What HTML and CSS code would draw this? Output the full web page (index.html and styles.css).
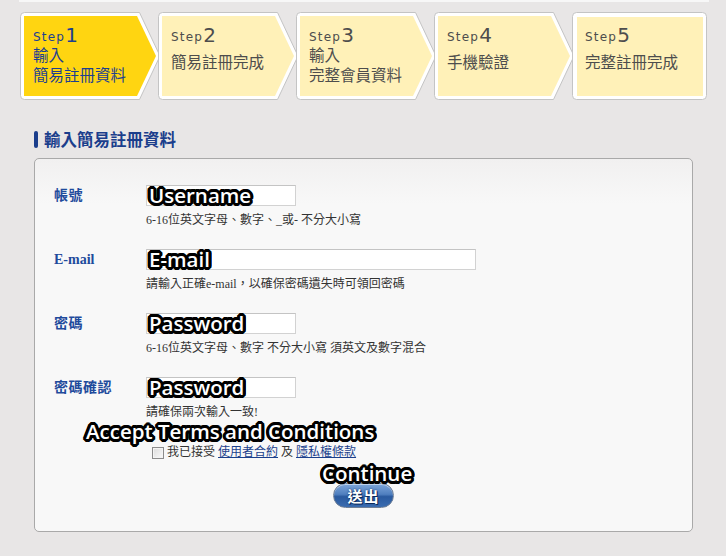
FILE: index.html
```html
<!DOCTYPE html>
<html lang="zh-Hant">
<head>
<meta charset="utf-8">
<title>輸入簡易註冊資料</title>
<link rel="stylesheet" href="styles.css">
</head>
<body>
<div class="page">
  <div class="topstrip"></div>

  <ol class="steps">
    <li class="step step-active">
      <svg class="step-bg" width="141" height="88" viewBox="0 0 141 88">
        <path class="outer" d="M4.5 0.5 H119.5 L140 44 L119.5 87.5 H4.5 A4 4 0 0 1 0.5 83.5 V4.5 A4 4 0 0 1 4.5 0.5 Z"/>
        <path class="inner" d="M4 4 H117 L136 44 L117 84 H4 Z"/>
      </svg>
      <div class="step-content">
        <div class="step-head"><span class="step-word">Step</span><span class="step-num">1</span></div>
        <div class="step-text">輸入<br>簡易註冊資料</div>
      </div>
    </li>
    <li class="step">
      <svg class="step-bg" width="141" height="88" viewBox="0 0 141 88">
        <path class="outer" d="M4.5 0.5 H119.5 L140 44 L119.5 87.5 H4.5 A4 4 0 0 1 0.5 83.5 V4.5 A4 4 0 0 1 4.5 0.5 Z"/>
        <path class="inner" d="M4 4 H117 L136 44 L117 84 H4 Z"/>
      </svg>
      <div class="step-content">
        <div class="step-head"><span class="step-word">Step</span><span class="step-num">2</span></div>
        <div class="step-text step-text-single">簡易註冊完成</div>
      </div>
    </li>
    <li class="step">
      <svg class="step-bg" width="141" height="88" viewBox="0 0 141 88">
        <path class="outer" d="M4.5 0.5 H119.5 L140 44 L119.5 87.5 H4.5 A4 4 0 0 1 0.5 83.5 V4.5 A4 4 0 0 1 4.5 0.5 Z"/>
        <path class="inner" d="M4 4 H117 L136 44 L117 84 H4 Z"/>
      </svg>
      <div class="step-content">
        <div class="step-head"><span class="step-word">Step</span><span class="step-num">3</span></div>
        <div class="step-text">輸入<br>完整會員資料</div>
      </div>
    </li>
    <li class="step">
      <svg class="step-bg" width="141" height="88" viewBox="0 0 141 88">
        <path class="outer" d="M4.5 0.5 H119.5 L140 44 L119.5 87.5 H4.5 A4 4 0 0 1 0.5 83.5 V4.5 A4 4 0 0 1 4.5 0.5 Z"/>
        <path class="inner" d="M4 4 H117 L136 44 L117 84 H4 Z"/>
      </svg>
      <div class="step-content">
        <div class="step-head"><span class="step-word">Step</span><span class="step-num">4</span></div>
        <div class="step-text step-text-single">手機驗證</div>
      </div>
    </li>
    <li class="step step-last">
      <svg class="step-bg" width="135" height="88" viewBox="0 0 135 88">
        <rect class="outer" x="0.5" y="0.5" width="134" height="87" rx="4" ry="4"/>
        <rect class="inner" x="5" y="5" width="126" height="79"/>
      </svg>
      <div class="step-content">
        <div class="step-head"><span class="step-word">Step</span><span class="step-num">5</span></div>
        <div class="step-text step-text-single">完整註冊完成</div>
      </div>
    </li>
  </ol>

  <h2 class="section-title">輸入簡易註冊資料</h2>

  <form class="panel">
    <div class="row">
      <label class="row-label" for="f-user">帳號</label>
      <div class="row-field">
        <div class="input-wrap">
          <input id="f-user" class="text-input input-short" type="text">
          <span class="annot annot-input">Username</span>
        </div>
        <div class="hint">6-16位英文字母、數字、_或- 不分大小寫</div>
      </div>
    </div>

    <div class="row">
      <label class="row-label label-latin" for="f-mail">E-mail</label>
      <div class="row-field">
        <div class="input-wrap">
          <input id="f-mail" class="text-input input-long" type="text">
          <span class="annot annot-input">E-mail</span>
        </div>
        <div class="hint">請輸入正確e-mail，以確保密碼遺失時可領回密碼</div>
      </div>
    </div>

    <div class="row">
      <label class="row-label" for="f-pw">密碼</label>
      <div class="row-field">
        <div class="input-wrap">
          <input id="f-pw" class="text-input input-short" type="password">
          <span class="annot annot-input">Password</span>
        </div>
        <div class="hint">6-16位英文字母、數字 不分大小寫 須英文及數字混合</div>
      </div>
    </div>

    <div class="row">
      <label class="row-label" for="f-pw2">密碼確認</label>
      <div class="row-field">
        <div class="input-wrap">
          <input id="f-pw2" class="text-input input-short" type="password">
          <span class="annot annot-input">Password</span>
        </div>
        <div class="hint">請確保兩次輸入一致!</div>
      </div>
    </div>

    <div class="agree-row">
      <span class="annot annot-terms">Accept Terms and Conditions</span>
      <input class="checkbox" type="checkbox" id="f-agree">
      <label for="f-agree" class="agree-text">我已接受 <a href="#" class="link">使用者合約</a> 及 <a href="#" class="link">隱私權條款</a></label>
    </div>

    <div class="submit-row">
      <div class="submit-wrap">
        <span class="annot annot-continue">Continue</span>
        <button type="button" class="submit-btn">送出</button>
      </div>
    </div>
  </form>
</div>
</body>
</html>
```

FILE: styles.css
```css
* {
  box-sizing: border-box;
}

html,
body {
  margin: 0;
  padding: 0;
}

body {
  width: 726px;
  height: 556px;
  overflow: hidden;
  background: #e8e6e6;
  color: #333;
  font-family: "Liberation Serif", "Noto Sans CJK TC", serif;
}

.page {
  padding-left: 19px;
  width: 726px;
}

.topstrip {
  width: 690px;
  height: 2px;
  background: #f7f7f7;
}

/* ---------- steps ---------- */
.steps {
  list-style: none;
  margin: 10px 0 0 1px;
  padding: 0;
  display: flex;
}

.step {
  position: relative;
  width: 138px;
  height: 88px;
  flex: none;
}

.step-last {
  width: 135px;
}

.step-bg {
  position: absolute;
  left: 0;
  top: 0;
  overflow: visible;
}

.step-bg .outer {
  fill: #ffffff;
  stroke: #c4c4c4;
  stroke-width: 1;
  stroke-linejoin: round;
}

.step-bg .inner {
  fill: #fff1b8;
}

.step-active .step-bg .inner {
  fill: #ffd511;
}

.step-content {
  position: relative;
  padding: 14px 0 0 13px;
  color: #4d4d4d;
}

.step-active .step-content {
  color: #1d3f90;
}

.step-head {
  height: 18px;
  line-height: 18px;
  font-family: "DejaVu Sans", sans-serif;
  white-space: nowrap;
}

.step-word {
  font-size: 12px;
  letter-spacing: 1.2px;
  vertical-align: 1px;
}

.step-num {
  font-size: 20px;
  font-weight: 400;
}

.step-text {
  font-family: "Noto Sans CJK TC", sans-serif;
  font-size: 15.5px;
  line-height: 20px;
  white-space: nowrap;
}

.step-text-single {
  margin-top: 7px;
}

/* ---------- section title ---------- */
.section-title {
  margin: 28px 0 8px 15px;
  display: flex;
  align-items: center;
  gap: 6px;
  height: 22px;
  font-family: "Noto Sans CJK TC", sans-serif;
  font-size: 16.5px;
  font-weight: 700;
  line-height: 22px;
  color: #1b3e8c;
}

.section-title::before {
  content: "";
  width: 4px;
  height: 17px;
  border-radius: 2px;
  background: #1b3e8c;
}

/* ---------- panel ---------- */
.panel {
  margin-left: 15px;
  width: 659px;
  height: 374px;
  border: 1px solid #a9a9a9;
  border-radius: 5px;
  background: linear-gradient(#f1f0f0 0, #f8f8f8 45px, #f8f8f8 100%);
  padding: 26px 0 0 19px;
}

.row {
  display: flex;
  align-items: flex-start;
  margin-bottom: 22px;
}

.row-label {
  width: 92px;
  flex: none;
  height: 21px;
  line-height: 21px;
  font-size: 14px;
  font-weight: 700;
  color: #1f4b9c;
  letter-spacing: 0.5px;
}

.label-latin {
  font-size: 14px;
  letter-spacing: 0;
}

.row-field {
  display: flex;
  flex-direction: column;
}

.input-wrap {
  position: relative;
  height: 21px;
}

.text-input {
  display: block;
  height: 21px;
  margin: 0;
  padding: 0 3px;
  border: 1px solid #d2d2d2;
  border-top-color: #c4c4c4;
  background: #fff;
  font-size: 12px;
}

.input-short {
  width: 150px;
}

.input-long {
  width: 330px;
}

.hint {
  margin-top: 7px;
  font-size: 12px;
  line-height: 14px;
  color: #333;
  white-space: nowrap;
}

/* ---------- annotation overlays ---------- */
.annot {
  position: absolute;
  font-family: "Open Sans", "Liberation Sans", sans-serif;
  font-size: 20.5px;
  font-weight: 600;
  line-height: 22px;
  color: #fff;
  white-space: nowrap;
  pointer-events: none;
  text-shadow:
    3px 0 0 #000, -3px 0 0 #000, 0 3px 0 #000, 0 -3px 0 #000,
    2px 2px 0 #000, -2px 2px 0 #000, 2px -2px 0 #000, -2px -2px 0 #000,
    3px 1px 0 #000, -3px 1px 0 #000, 3px -1px 0 #000, -3px -1px 0 #000,
    1px 3px 0 #000, -1px 3px 0 #000, 1px -3px 0 #000, -1px -3px 0 #000,
    0 0 3px #000;
}

.annot-input {
  left: 3px;
  top: -1px;
}

/* ---------- agree ---------- */
.agree-row {
  position: relative;
  display: flex;
  align-items: center;
  margin: 26px 0 0 92px;
  height: 15px;
}

.annot-terms {
  left: -60px;
  top: -25px;
}

.checkbox {
  appearance: none;
  -webkit-appearance: none;
  width: 12px;
  height: 12px;
  margin: 0 3px 0 6px;
  border: 1px solid #8c8c8c;
  background: linear-gradient(135deg, #dcdcdc, #fafafa);
  box-shadow: inset 0 0 0 1px #f4f4f4;
}

.agree-text {
  font-size: 12px;
  line-height: 15px;
  color: #333;
  white-space: nowrap;
}

.link {
  color: #1a3f8c;
  text-decoration: underline;
}

/* ---------- submit ---------- */
.submit-row {
  display: flex;
  justify-content: center;
  margin: 23px 0 0 -19px;
}

.submit-wrap {
  position: relative;
}

.annot-continue {
  left: -11px;
  top: -21px;
}

.submit-btn {
  display: block;
  width: 61px;
  height: 25px;
  margin: 0;
  padding: 0;
  border: 1px solid #6f7f96;
  border-radius: 13px;
  background: linear-gradient(#7ea6da 0%, #4f7fbf 45%, #2a5a9f 55%, #3a6cb0 100%);
  box-shadow: inset 0 1px 0 rgba(255, 255, 255, 0.5);
  color: #fff;
  font-family: "Noto Sans CJK TC", sans-serif;
  font-size: 15px;
  font-weight: 700;
  line-height: 22px;
  letter-spacing: 1px;
  text-shadow: 0 0 2px #0d2a5a, 1px 1px 0 #0d2a5a;
  cursor: pointer;
}
```
